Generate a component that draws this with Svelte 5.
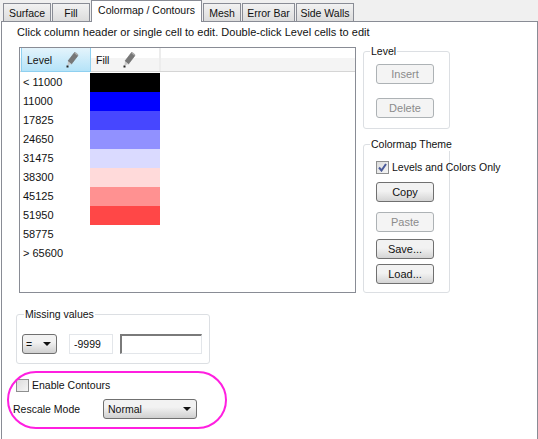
<script>
	const tabs = [
		{ name: 'Surface', w: 48 },
		{ name: 'Fill', w: 38 },
		{ name: 'Colormap / Contours', w: 111, active: true },
		{ name: 'Mesh', w: 38 },
		{ name: 'Error Bar', w: 53 },
		{ name: 'Side Walls', w: 58 }
	];

	const levels = [
		{ label: '< 11000', color: '#000000' },
		{ label: '11000', color: '#0000ff' },
		{ label: '17825', color: '#4747ff' },
		{ label: '24650', color: '#9191ff' },
		{ label: '31475', color: '#dadaff' },
		{ label: '38300', color: '#ffdada' },
		{ label: '45125', color: '#ff9191' },
		{ label: '51950', color: '#ff4747' },
		{ label: '58775', color: 'transparent' },
		{ label: '> 65600', color: 'transparent' }
	];
</script>

{#snippet pencil()}
	<svg class="pencil" width="13" height="17" viewBox="0 0 13 17">
		<path d="M8.500 1.500l3.500 3-6.500 8.500-3.500-3z" fill="#777" stroke="#666" stroke-width=".6" />
		<path d="M9.300 1l3 2.500-1 1.300-3-2.500z" fill="#a8a8a8" />
		<path d="M2 10.300l3.400 2.800-4 1.500z" fill="#c9c9c9" />
		<path d="M.5 14.500h2v2h-2z" fill="#222" />
	</svg>
{/snippet}

{#snippet arrow()}
	<svg class="arrow" width="8" height="4" viewBox="0 0 8 4"><path d="M0 0h8L4 4z" fill="#111" /></svg>
{/snippet}

<div class="window">
	<div class="tabs">
		{#each tabs as tab}
			<div class="tab" class:active={tab.active} style="width:{tab.w}px">{tab.name}</div>
		{/each}
	</div>

	<div class="panel">
		<p class="hint">Click column header or single cell to edit. Double-click Level cells to edit</p>

		<div class="main">
			<div class="grid">
				<div class="head">
					<div class="col selected"><span>Level</span>{@render pencil()}</div>
					<div class="col"><span>Fill</span>{@render pencil()}</div>
				</div>
				{#each levels as row}
					<div class="row">
						<span class="value">{row.label}</span>
						<span class="swatch" style="background:{row.color}"></span>
					</div>
				{/each}
			</div>

			<div class="side">
				<fieldset class="group level">
					<legend>Level</legend>
					<button class="btn" disabled>Insert</button>
					<button class="btn" disabled>Delete</button>
				</fieldset>

				<fieldset class="group theme">
					<legend>Colormap Theme</legend>
					<label class="check">
						<span class="box checked">
							<svg width="9" height="9" viewBox="0 0 9 9"><path d="M1 4.500l2.500 3L8 1" fill="none" stroke="#4a5a9a" stroke-width="2" /></svg>
						</span>
						Levels and Colors Only
					</label>
					<button class="btn copy">Copy</button>
					<button class="btn paste" disabled>Paste</button>
					<button class="btn save">Save...</button>
					<button class="btn load">Load...</button>
				</fieldset>
			</div>
		</div>

		<fieldset class="group missing">
			<legend>Missing values</legend>
			<div class="select eq"><span>=</span>{@render arrow()}</div>
			<div class="input">-9999</div>
			<div class="input sunken"></div>
		</fieldset>

		<div class="contours">
			<label class="check">
				<span class="box"></span>
				Enable Contours
			</label>
			<div class="rescale">
				<span class="rescale-label">Rescale Mode</span>
				<div class="select mode"><span>Normal</span>{@render arrow()}</div>
			</div>
			<div class="ring"></div>
		</div>
	</div>
</div>

<style>
	:global(body) {
		background: #fff;
	}

	.window {
		width: 538px;
		height: 439px;
		overflow: hidden;
		background: #fff;
		color: #111;
		font: 10.5px/14px "Liberation Sans", Arial, sans-serif;
		box-sizing: border-box;
	}

	.tabs {
		display: flex;
		align-items: flex-end;
		gap: 1px;
		height: 21px;
		padding-left: 3px;
		background: #f0f0f0;
		box-sizing: border-box;
	}

	.tab {
		height: 18px;
		box-sizing: border-box;
		border: 1px solid #898c95;
		border-bottom: 0;
		text-align: center;
		line-height: 18px;
		background: linear-gradient(#f2f2f2, #dcdcdc);
		white-space: nowrap;
	}

	.tab.active {
		height: 22px;
		margin-bottom: -1px;
		background: #fff;
		position: relative;
		line-height: 19px;
	}

	.panel {
		height: 418px;
		margin-left: 1px;
		border: 1px solid #898c95;
		border-width: 1px 1px 0;
		box-sizing: border-box;
	}

	.hint {
		margin: 0;
		padding: 3px 0 0 15px;
		height: 25px;
		box-sizing: border-box;
		font-size: 11px;
		letter-spacing: 0.03px;
		white-space: nowrap;
	}

	.main {
		display: flex;
		align-items: flex-start;
		gap: 7px;
		padding-left: 17px;
	}

	.grid {
		width: 337px;
		height: 246px;
		border: 1px solid #898c95;
		box-sizing: border-box;
		background: #fff;
	}

	.head {
		display: flex;
		height: 23px;
		margin-bottom: 1px;
		padding-left: 1px;
		border-bottom: 1px solid #d5d5d5;
		background: linear-gradient(#fff 45%, #f4f4f4 45%);
	}

	.col {
		display: flex;
		align-items: center;
		width: 70px;
		box-sizing: border-box;
		padding-left: 5px;
		border-right: 2px solid #ececec;
	}

	.col .pencil {
		margin-left: auto;
		margin-right: 23px;
	}

	.col.selected {
		border: 1px solid #8fd0f0;
		border-width: 0 1px 1px 1px;
		height: 24px;
		background: linear-gradient(#e4f4fc, #b5e3f8);
	}

	.col.selected .pencil {
		margin-right: 11px;
	}

	.row {
		display: flex;
		height: 19px;
		line-height: 19px;
	}

	.value {
		width: 70px;
		padding-left: 3px;
		box-sizing: border-box;
		font-size: 11px;
	}

	.swatch {
		width: 70px;
	}

	.group {
		margin: 0;
		padding: 0;
		min-width: 0;
		border: 1px solid #dcdfe3;
		border-radius: 3px;
		box-sizing: border-box;
	}

	legend {
		padding: 0 1px;
		margin-left: -6px;
		white-space: nowrap;
	}

	.side {
		display: flex;
		flex-direction: column;
		gap: 8px;
		margin-top: -1px;
		padding-top: 5px;
	}

	.level,
	.theme {
		width: 87px;
		display: flex;
		flex-direction: column;
		align-items: flex-start;
		padding-left: 12px;
	}

	.level {
		height: 85px;
		margin-top: -7px;
		padding-top: 6px;
		gap: 14px;
	}

	.theme {
		height: 156px;
		padding-top: 9px;
	}

	.btn {
		width: 58px;
		height: 20px;
		padding: 0;
		box-sizing: border-box;
		border: 1px solid #707070;
		border-radius: 3px;
		background: linear-gradient(#f2f2f2 45%, #d4d4d4);
		color: #111;
		font: inherit;
		font-size: 11px;
	}

	.btn:disabled {
		border-color: #adb2b5;
		background: #f4f4f4;
		color: #8b8b8b;
	}

	.copy {
		margin-top: 8px;
	}

	.paste {
		margin-top: 10px;
	}

	.save {
		margin-top: 7px;
	}

	.load {
		margin-top: 5px;
	}

	.check {
		display: flex;
		align-items: center;
		gap: 3px;
		white-space: nowrap;
	}

	.box {
		display: flex;
		align-items: center;
		justify-content: center;
		width: 13px;
		height: 13px;
		box-sizing: border-box;
		border: 1px solid #8e8f8f;
		background: linear-gradient(135deg, #dcdcdc, #f5f5f5);
	}

	.missing {
		display: flex;
		align-items: flex-start;
		width: 194px;
		height: 57px;
		margin: 14px 0 0 14px;
		padding: 13px 0 0 5px;
	}

	.missing legend {
		margin-left: 2px;
	}

	.select {
		display: flex;
		align-items: center;
		justify-content: space-between;
		height: 20px;
		box-sizing: border-box;
		padding: 0 5px 0 3px;
		border: 1px solid #707070;
		border-radius: 3px;
		background: linear-gradient(#f2f2f2 40%, #cfcfcf);
	}

	.eq {
		width: 35px;
	}

	.input {
		width: 44px;
		height: 20px;
		margin-left: 12px;
		padding-left: 4px;
		box-sizing: border-box;
		border: 1px solid #e3e6ea;
		line-height: 18px;
	}

	.sunken {
		width: 82px;
		margin-left: 7px;
		border-color: #7a7a7a #e3e6ea #e3e6ea #7a7a7a;
		border-width: 2px 1px 1px 2px;
	}

	.contours {
		position: relative;
		height: 58px;
		margin: 7px 0 0 5px;
		width: 220px;
		padding: 7px 0 0 9px;
		box-sizing: border-box;
	}

	.rescale {
		display: flex;
		align-items: center;
		margin-top: 7px;
		margin-left: -3px;
	}

	.rescale-label {
		width: 90px;
	}

	.mode {
		width: 94px;
		height: 20px;
		padding-left: 4px;
	}

	.ring {
		position: absolute;
		inset: 0;
		border: 2px solid #ff1fe0;
		border-radius: 29px;
	}
</style>
